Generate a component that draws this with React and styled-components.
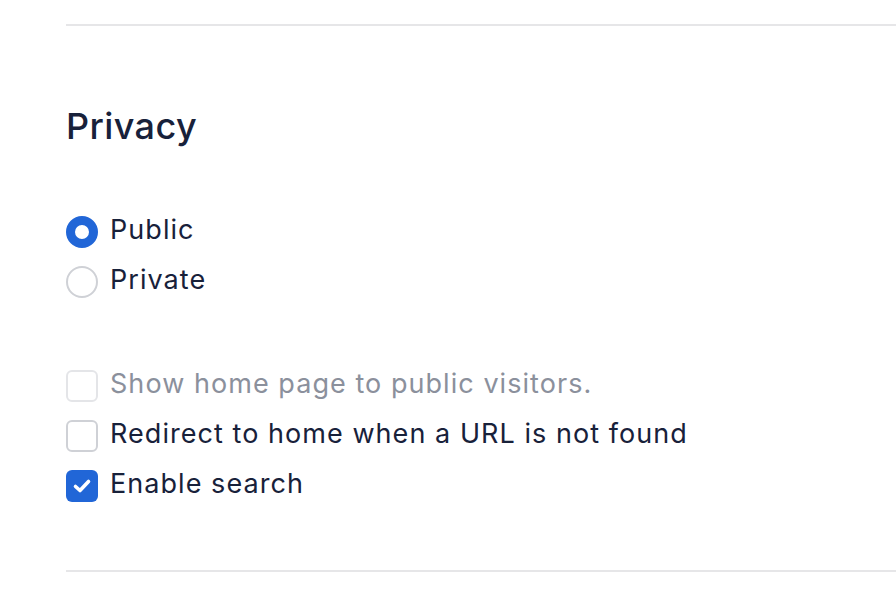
import React from "react";
import styled, { createGlobalStyle } from "styled-components";

const Global = createGlobalStyle`
  html, body { margin: 0; padding: 0; background: #ffffff; }
  body { font-family: Inter, "Noto Sans", sans-serif; color: #18213a; }
`;

const Page = styled.div`
  padding: 24px 0 0 66px;
  display: flex;
  flex-direction: column;
`;

const Divider = styled.hr`
  margin: 0;
  border: none;
  border-top: 2px solid #e6e6e8;
  width: 100%;
`;

const Section = styled.section`
  display: flex;
  flex-direction: column;
  padding: 78px 0 68px;
`;

const Title = styled.h2`
  margin: 0 0 68px;
  font-size: 36px;
  font-weight: 500;
  line-height: 44px;
  color: #18213a;
  letter-spacing: 0.4px;
`;

const Group = styled.div`
  display: flex;
  flex-direction: column;
  gap: 18px;
  margin-bottom: ${(p) => p.$mb || 0}px;
`;

const Option = styled.label`
  display: flex;
  align-items: center;
  gap: 12px;
  font-size: 27px;
  line-height: 32px;
  letter-spacing: 1.05px;
  color: ${(p) => (p.$disabled ? "#8b909c" : "#18213a")};
`;

const Label = styled.span`
  transform: translateY(-2px);
`;

const Radio = styled.span`
  box-sizing: border-box;
  width: 32px;
  height: 32px;
  border-radius: 50%;
  flex: none;
  border: ${(p) => (p.$checked ? "9px solid #2166d7" : "2px solid #cfd1d6")};
  background: #fff;
`;

const Box = styled.span`
  box-sizing: border-box;
  width: 32px;
  height: 32px;
  border-radius: 6px;
  flex: none;
  display: flex;
  align-items: center;
  justify-content: center;
  background: ${(p) => (p.$checked ? "#2166d7" : "#fff")};
  border: ${(p) =>
    p.$checked ? "none" : p.$disabled ? "2px solid #e4e5e8" : "2px solid #cfd1d6"};
  & > svg {
    flex: none;
    display: block;
  }
`;

const Check = () => (
  <svg width="32" height="32" viewBox="0 0 32 32" fill="none">
    <path d="M9.5 16.5 L14 20.5 L22.5 11.5" stroke="#fff" strokeWidth="3.6" strokeLinecap="round" strokeLinejoin="round" />
  </svg>
);

export default function App() {
  return (
    <>
      <Global />
      <Page>
        <Divider />
        <Section>
          <Title>Privacy</Title>
          <Group $mb={72}>
            <Option><Radio $checked /><Label>Public</Label></Option>
            <Option><Radio /><Label>Private</Label></Option>
          </Group>
          <Group>
            <Option $disabled><Box $disabled /><Label>Show home page to public visitors.</Label></Option>
            <Option><Box /><Label>Redirect to home when a URL is not found</Label></Option>
            <Option><Box $checked><Check /></Box><Label>Enable search</Label></Option>
          </Group>
        </Section>
        <Divider />
      </Page>
    </>
  );
}
